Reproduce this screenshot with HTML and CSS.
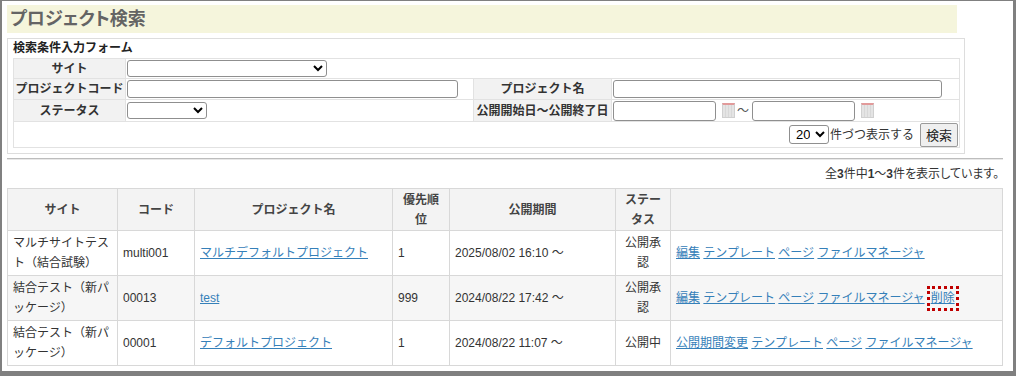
FILE: index.html
```html
<!DOCTYPE html>
<html lang="ja">
<head>
  <meta charset="UTF-8">
  <meta name="viewport" content="width=device-width, initial-scale=1.0">
  <title>プロジェクト検索</title>
  <link rel="stylesheet" href="styles.css">
</head>
<body>

  <div class="frame">
    <div class="page">

      <!-- Page title -->
      <h1 class="page-title">プロジェクト検索</h1>

      <!-- Search form -->
      <form class="search-box" onsubmit="return false;">
        <div class="search-caption">検索条件入力フォーム</div>
        <table class="search-table">
          <colgroup>
            <col class="col-label">
            <col class="col-field">
            <col class="col-label2">
            <col>
          </colgroup>
          <tr class="row-site">
            <th>サイト</th>
            <td colspan="3"><select class="sel-site"><option></option></select></td>
          </tr>
          <tr class="row-code">
            <th>プロジェクトコード</th>
            <td><input type="text" class="in-code"></td>
            <th>プロジェクト名</th>
            <td><input type="text" class="in-name"></td>
          </tr>
          <tr class="row-status">
            <th>ステータス</th>
            <td><select class="sel-status"><option></option></select></td>
            <th>公開開始日～公開終了日</th>
            <td>
              <div class="date-range">
                <input type="text" class="in-date">
                <span class="cal-icon"></span>
                <span class="tilde">～</span>
                <input type="text" class="in-date">
                <span class="cal-icon"></span>
              </div>
            </td>
          </tr>
          <tr class="row-submit">
            <td colspan="4">
              <div class="submit-line">
                <select class="sel-count"><option>20</option></select>
                <span>件づつ表示する</span>
                <button type="button" class="btn-search">検索</button>
              </div>
            </td>
          </tr>
        </table>
      </form>

      <hr class="divider">

      <p class="result-count">全<b>3</b>件中<b>1</b>～<b>3</b>件を表示しています。</p>

      <!-- Result list -->
      <table class="result-table">
        <colgroup>
          <col class="c-site">
          <col class="c-code">
          <col class="c-name">
          <col class="c-prio">
          <col class="c-period">
          <col class="c-status">
          <col>
        </colgroup>
        <thead>
          <tr>
            <th>サイト</th>
            <th>コード</th>
            <th>プロジェクト名</th>
            <th>優先順位</th>
            <th>公開期間</th>
            <th>ステータス</th>
            <th></th>
          </tr>
        </thead>
        <tbody>
          <tr>
            <td><span class="site-name">マルチサイトテス<br>ト（結合試験）</span></td>
            <td>multi001</td>
            <td><a href="#">マルチデフォルトプロジェクト</a></td>
            <td>1</td>
            <td>2025/08/02 16:10 ～</td>
            <td class="status">公開承認</td>
            <td class="actions">
              <a href="#">編集</a> <a href="#">テンプレート</a> <a href="#">ページ</a> <a href="#">ファイルマネージャ</a>
            </td>
          </tr>
          <tr class="odd">
            <td><span class="site-name">結合テスト（新パッケージ）</span></td>
            <td>00013</td>
            <td><a href="#">test</a></td>
            <td>999</td>
            <td>2024/08/22 17:42 ～</td>
            <td class="status">公開承認</td>
            <td class="actions">
              <a href="#">編集</a> <a href="#">テンプレート</a> <a href="#">ページ</a> <a href="#">ファイルマネージャ</a><span class="marked"><a href="#">削除</a></span>
            </td>
          </tr>
          <tr>
            <td><span class="site-name">結合テスト（新パッケージ）</span></td>
            <td>00001</td>
            <td><a href="#">デフォルトプロジェクト</a></td>
            <td>1</td>
            <td>2024/08/22 11:07 ～</td>
            <td class="status">公開中</td>
            <td class="actions">
              <a href="#">公開期間変更</a> <a href="#">テンプレート</a> <a href="#">ページ</a> <a href="#">ファイルマネージャ</a>
            </td>
          </tr>
        </tbody>
      </table>

    </div>
  </div>

</body>
</html>
```

FILE: styles.css
```css
/* Page */
html, body {
  margin: 0;
  padding: 0;
  background: #fff;
}

body {
  font-family: "Liberation Sans", "Noto Sans CJK JP", sans-serif;
  font-size: 12px;
  color: #333;
}

/* Gray screenshot frame */
.frame {
  width: 1016px;
  height: 376px;
  box-sizing: border-box;
  border-style: solid;
  border-color: #808080;
  border-width: 1px 3px 5px 2px;
  overflow: hidden;
}

.page {
  padding: 4px 5px 0;
}

/* Title bar */
.page-title {
  width: 950px;
  height: 28px;
  margin: 0;
  padding-left: 3px;
  box-sizing: border-box;
  background: #f5f5dc;
  color: #646464;
  font-size: 18px;
  font-weight: bold;
  line-height: 28px;
  font-feature-settings: "palt";
}

/* Search form */
.search-box {
  width: 958px;
  box-sizing: border-box;
  margin: 5px 0 0;
  padding: 0 5px 5px;
  border: 1px solid #ddd;
}

.search-caption {
  font-weight: bold;
  color: #222;
  line-height: 19px;
}

.search-table {
  width: 947px;
  border-collapse: collapse;
  table-layout: fixed;
}

.search-table .col-label { width: 112px; }
.search-table .col-field { width: 348px; }
.search-table .col-label2 { width: 138px; }

.search-table th,
.search-table td {
  border: 1px solid #e2e2e2;
  padding: 0 1px;
  line-height: 16px;
}

.search-table th {
  background: #f2f2f2;
  color: #333;
  text-align: center;
  white-space: nowrap;
}

.row-site { height: 20px; }
.row-code { height: 21px; }
.row-status { height: 22px; }
.row-submit { height: 26px; }

.search-table select,
.search-table input,
.search-table button {
  font-family: inherit;
  font-size: 12px;
  margin: 0;
  box-sizing: border-box;
  vertical-align: middle;
}

.search-table input {
  height: 18px;
  border: 1px solid #8f8f8f;
  border-radius: 3px;
  padding: 0 3px;
}

.search-table select {
  height: 17px;
  border: 1px solid #8f8f8f;
  border-radius: 3px;
  background: #fff;
  padding: 0 2px;
}

.sel-site { width: 200px; }
.sel-status { width: 80px; }
.in-code { width: 331px; }
.in-name { width: 329px; }

.date-range {
  display: flex;
  align-items: center;
}

.search-table .in-date {
  width: 103px;
  height: 20px;
}

.cal-icon {
  width: 11px;
  height: 12px;
  margin: 0 2px 0 6px;
  background: repeating-linear-gradient(90deg, #e4e4e4 0 2px, #d8d8d8 2px 3px);
  border: 1px solid #d0d0d0;
  border-top: 2px solid #e29a9a;
}

.tilde {
  margin-right: 3px;
  color: #555;
}

.submit-line {
  display: flex;
  justify-content: flex-end;
  align-items: center;
  gap: 1px;
}

.search-table .sel-count {
  width: 40px;
  height: 19px;
  font-size: 13px;
}

.btn-search {
  width: 38px;
  height: 24px;
  margin-left: 5px !important;
  padding: 0;
  background: #efefef;
  border: 1px solid #9a9a9a;
  border-radius: 2px;
  font-size: 13px !important;
  color: #222;
}

/* Divider and count */
.divider {
  width: 996px;
  margin: 4px 0 0;
  border: 0;
  border-top: 1px solid #bdbdbd;
  border-bottom: 1px solid #e8e8e8;
}

.result-count {
  width: 996px;
  margin: 0;
  padding: 5px 4px 0 0;
  box-sizing: border-box;
  text-align: right;
  line-height: 18px;
  color: #333;
  font-feature-settings: "palt";
}

/* Result table */
.result-table {
  width: 996px;
  margin-top: 5px;
  border-collapse: collapse;
  table-layout: fixed;
}

.c-site { width: 110px; }
.c-code { width: 77px; }
.c-name { width: 198px; }
.c-prio { width: 57px; }
.c-period { width: 166px; }
.c-status { width: 55px; }

.result-table th,
.result-table td {
  border: 1px solid #d8d8d8;
  padding: 2px 5px;
  line-height: 20px;
  vertical-align: middle;
  text-align: left;
}

/* Site names wrap after eight characters */
.site-name {
  display: block;
  width: 8.2em;
}

.result-table thead tr {
  height: 42px;
}

.result-table tbody tr {
  height: 45px;
}

.result-table th {
  padding-top: 0;
  padding-bottom: 0;
  background: #f3f3f3;
  font-weight: bold;
  color: #444;
  text-align: center;
}

.result-table tr.odd td {
  background: #f6f6f6;
}

.result-table td.status {
  text-align: center;
}

.result-table a {
  color: #3580b9;
  text-decoration: underline;
}

.actions {
  white-space: nowrap;
}

/* Highlighted delete link */
.marked {
  display: inline-block;
  margin-left: 2px;
  padding: 1px 1px 2px;
  border: 3px dotted #c00000;
  line-height: 16px;
}
```
